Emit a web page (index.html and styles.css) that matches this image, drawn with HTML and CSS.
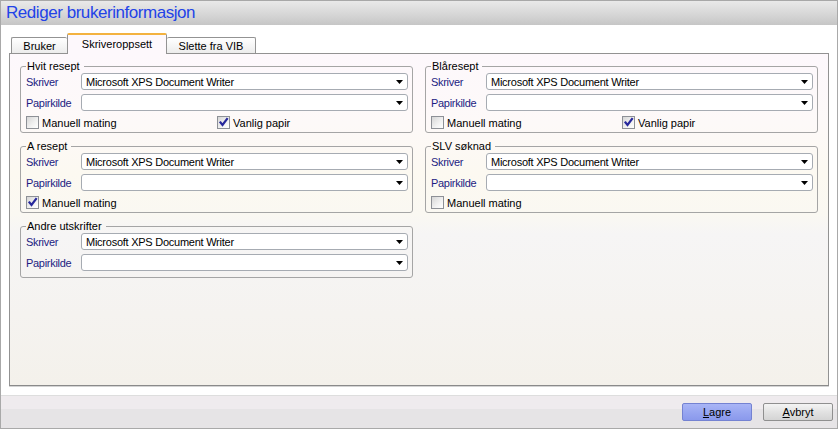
FILE: index.html
```html
<!DOCTYPE html>
<html lang="no">
<head>
<meta charset="utf-8">
<title>Rediger brukerinformasjon</title>
<link rel="stylesheet" href="styles.css">
</head>
<body>
<div class="window">
  <div class="titlebar"><span class="title">Rediger brukerinformasjon</span></div>
  <div class="main">
    <div class="tabs">
      <div class="tab tab-bruker">Bruker</div>
      <div class="tab tab-active">Skriveroppsett</div>
      <div class="tab tab-slette">Slette fra VIB</div>
    </div>
    <div class="panel">
      <div class="groups">
        <fieldset class="group">
          <legend>Hvit resept</legend>
          <div class="field"><span class="lbl">Skriver</span><div class="combo"><span class="val">Microsoft XPS Document Writer</span><svg class="arrow" width="7" height="4" viewBox="0 0 7 4"><polygon points="0,0 7,0 3.5,4" fill="#000"/></svg></div></div>
          <div class="field"><span class="lbl">Papirkilde</span><div class="combo"><span class="val"></span><svg class="arrow" width="7" height="4" viewBox="0 0 7 4"><polygon points="0,0 7,0 3.5,4" fill="#000"/></svg></div></div>
          <div class="checks">
            <div class="chk"><span class="box"></span><span>Manuell mating</span></div>
            <div class="chk"><span class="box"><svg width="11" height="11" viewBox="0 0 11 11"><path d="M2.5 5.5 L4.5 8 L9 2" fill="none" stroke="#27289c" stroke-width="2.2" stroke-linecap="square"/></svg></span><span>Vanlig papir</span></div>
          </div>
        </fieldset>
        <fieldset class="group">
          <legend>Blåresept</legend>
          <div class="field"><span class="lbl">Skriver</span><div class="combo"><span class="val">Microsoft XPS Document Writer</span><svg class="arrow" width="7" height="4" viewBox="0 0 7 4"><polygon points="0,0 7,0 3.5,4" fill="#000"/></svg></div></div>
          <div class="field"><span class="lbl">Papirkilde</span><div class="combo"><span class="val"></span><svg class="arrow" width="7" height="4" viewBox="0 0 7 4"><polygon points="0,0 7,0 3.5,4" fill="#000"/></svg></div></div>
          <div class="checks">
            <div class="chk"><span class="box"></span><span>Manuell mating</span></div>
            <div class="chk"><span class="box"><svg width="11" height="11" viewBox="0 0 11 11"><path d="M2.5 5.5 L4.5 8 L9 2" fill="none" stroke="#27289c" stroke-width="2.2" stroke-linecap="square"/></svg></span><span>Vanlig papir</span></div>
          </div>
        </fieldset>
        <fieldset class="group">
          <legend>A resept</legend>
          <div class="field"><span class="lbl">Skriver</span><div class="combo"><span class="val">Microsoft XPS Document Writer</span><svg class="arrow" width="7" height="4" viewBox="0 0 7 4"><polygon points="0,0 7,0 3.5,4" fill="#000"/></svg></div></div>
          <div class="field"><span class="lbl">Papirkilde</span><div class="combo"><span class="val"></span><svg class="arrow" width="7" height="4" viewBox="0 0 7 4"><polygon points="0,0 7,0 3.5,4" fill="#000"/></svg></div></div>
          <div class="checks">
            <div class="chk"><span class="box"><svg width="11" height="11" viewBox="0 0 11 11"><path d="M2.5 5.5 L4.5 8 L9 2" fill="none" stroke="#27289c" stroke-width="2.2" stroke-linecap="square"/></svg></span><span>Manuell mating</span></div>
          </div>
        </fieldset>
        <fieldset class="group">
          <legend>SLV søknad</legend>
          <div class="field"><span class="lbl">Skriver</span><div class="combo"><span class="val">Microsoft XPS Document Writer</span><svg class="arrow" width="7" height="4" viewBox="0 0 7 4"><polygon points="0,0 7,0 3.5,4" fill="#000"/></svg></div></div>
          <div class="field"><span class="lbl">Papirkilde</span><div class="combo"><span class="val"></span><svg class="arrow" width="7" height="4" viewBox="0 0 7 4"><polygon points="0,0 7,0 3.5,4" fill="#000"/></svg></div></div>
          <div class="checks">
            <div class="chk"><span class="box"></span><span>Manuell mating</span></div>
          </div>
        </fieldset>
        <fieldset class="group group-short">
          <legend>Andre utskrifter</legend>
          <div class="field"><span class="lbl">Skriver</span><div class="combo"><span class="val">Microsoft XPS Document Writer</span><svg class="arrow" width="7" height="4" viewBox="0 0 7 4"><polygon points="0,0 7,0 3.5,4" fill="#000"/></svg></div></div>
          <div class="field"><span class="lbl">Papirkilde</span><div class="combo"><span class="val"></span><svg class="arrow" width="7" height="4" viewBox="0 0 7 4"><polygon points="0,0 7,0 3.5,4" fill="#000"/></svg></div></div>
        </fieldset>
      </div>
    </div>
  </div>
  <div class="footer">
    <button class="btn btn-primary"><u>L</u>agre</button>
    <button class="btn"><u>A</u>vbryt</button>
  </div>
</div>
</body>
</html>
```

FILE: styles.css
```css
html, body {
  margin: 0;
  padding: 0;
  background: #ffffff;
}

body {
  width: 840px;
  height: 429px;
  overflow: hidden;
  font-family: "Liberation Sans", Arial, sans-serif;
  font-size: 11px;
  color: #000;
}

.window {
  width: 838px;
  height: 429px;
  box-sizing: border-box;
  border-left: 1px solid #a9a9a9;
  border-right: 1px solid #a9a9a9;
  border-bottom: 1px solid #a9a9a9;
  display: flex;
  flex-direction: column;
  background: #fff;
}

.titlebar {
  height: 25px;
  box-sizing: border-box;
  border-top: 1px solid #a8a8a8;
  background: linear-gradient(#e9e9e9, #dadada 45%, #c6c6c6);
  padding-left: 5px;
  display: flex;
  align-items: center;
}

.title {
  font-size: 17px;
  color: #2243e8;
  letter-spacing: -0.45px;
  line-height: 20px;
  margin-top: 0px;
}

.main {
  flex: 1;
  padding: 8px 0 0 8px;
}

.tabs {
  display: flex;
  align-items: flex-end;
  height: 20px;
  margin-left: 2px;
  position: relative;
  z-index: 1;
}

.tab {
  box-sizing: border-box;
  height: 16px;
  border: 1px solid #939393;
  border-bottom: none;
  border-radius: 2px 2px 0 0;
  background: linear-gradient(#ffffff, #ececec);
  display: flex;
  align-items: center;
  justify-content: center;
  padding-top: 1px;
}

.tab-bruker {
  width: 56px;
  border-right: none;
}

.tab-active {
  width: 100px;
  height: 21px;
  margin-bottom: -1px;
  border-top: 2px solid #f3b23f;
  background: #fdf8fc;
  padding-top: 0;
  padding-bottom: 1px;
}

.tab-slette {
  width: 89px;
  border-left: none;
}

.panel {
  width: 820px;
  height: 333px;
  box-sizing: border-box;
  border: 1px solid #929292;
  border-bottom-color: #8a8a8a;
  box-shadow: 0 1px 0 #d4d4d4;
  background: linear-gradient(#fdf8fc 0px, #fdf9f8 70px, #fcf9f1 120px, #faf8f2 160px, #f6f5f5 180px, #f5f3f0 260px, #f4f1eb 331px);
  padding: 6px 10px 0 10px;
}

.groups {
  display: grid;
  grid-template-columns: 393px 393px;
  column-gap: 12px;
  row-gap: 7px;
  align-items: start;
}

.group {
  margin: 0;
  padding: 0 4px 2px 5px;
  border: 1px solid #a5a5a5;
  border-radius: 3px;
  min-width: 0;
}

.group-short {
  padding-bottom: 6px;
}

.group legend {
  padding: 0 4px 0 1px;
  line-height: 13px;
  font-size: 11px;
}

.field {
  display: flex;
  align-items: center;
  height: 17px;
}

.field + .field {
  margin-top: 4px;
}

.lbl {
  width: 55px;
  flex: none;
  color: #1c1c82;
  letter-spacing: -0.3px;
}

.combo {
  flex: 1;
  height: 17px;
  box-sizing: border-box;
  border: 1px solid #a6abb2;
  border-radius: 3px;
  background: #fff;
  display: flex;
  align-items: center;
  justify-content: space-between;
  padding: 0 4px 0 4px;
}

.val {
  letter-spacing: -0.25px;
}

.arrow {
  display: block;
}

.checks {
  display: grid;
  grid-template-columns: 1fr 1fr;
  height: 15px;
  margin-top: 4px;
  align-items: center;
}

.chk {
  display: flex;
  align-items: center;
  gap: 3px;
}

.box {
  width: 13px;
  height: 13px;
  box-sizing: border-box;
  border: 1px solid #8d9096;
  background: linear-gradient(135deg, #d6d6d6, #f2f2f2 60%, #ffffff);
  display: flex;
  align-items: center;
  justify-content: center;
}

.box svg {
  display: block;
}

.footer {
  margin-top: 9px;
  height: 33px;
  box-sizing: border-box;
  border-top: 1px solid #dedede;
  background: linear-gradient(#efebee 0, #efebee 13px, #e6e4e6 13px, #e6e4e6 100%);
  display: flex;
  justify-content: flex-end;
  align-items: flex-start;
  padding: 7px 4px 0 0;
  gap: 11px;
}

.btn {
  width: 70px;
  height: 18px;
  box-sizing: border-box;
  margin: 0;
  padding: 0;
  font-family: "Liberation Sans", Arial, sans-serif;
  font-size: 11px;
  color: #000;
  border: 1px solid #8f8f8f;
  border-radius: 2px;
  background: linear-gradient(#f4f4f4, #e2e2e2 50%, #d4d4d4);
}

.btn-primary {
  border-color: #7482d2;
  background: linear-gradient(#a9b5f6, #98a6f1 50%, #8a99ec);
}
```
